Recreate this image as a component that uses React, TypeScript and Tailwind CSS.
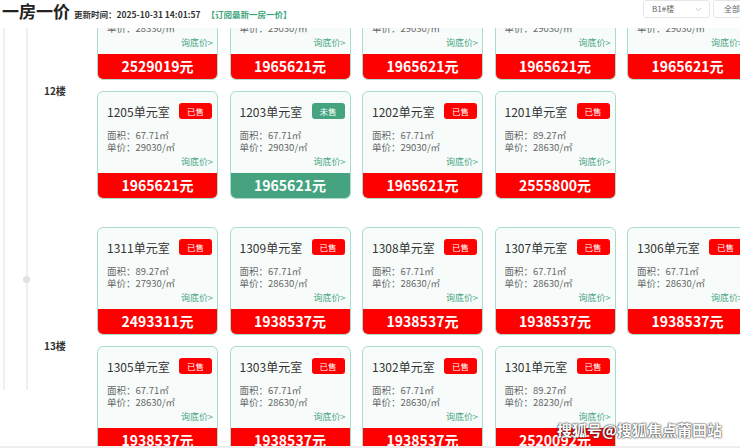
import React from "react";

type Unit = {
  no: string;
  area: string;
  price: string;
  total: string;
  sold: boolean;
};

type Floor = { name: string; units: Unit[] };

const u = (no: string, area: string, price: string, total: string, sold = true): Unit => ({
  no,
  area,
  price,
  total,
  sold,
});

const floors: Floor[] = [
  {
    name: "12楼",
    units: [
      u("1211", "89.27", "28330", "2529019"),
      u("1209", "67.71", "29030", "1965621"),
      u("1208", "67.71", "29030", "1965621"),
      u("1207", "67.71", "29030", "1965621"),
      u("1206", "67.71", "29030", "1965621"),
      u("1205", "67.71", "29030", "1965621"),
      u("1203", "67.71", "29030", "1965621", false),
      u("1202", "67.71", "29030", "1965621"),
      u("1201", "89.27", "28630", "2555800"),
    ],
  },
  {
    name: "13楼",
    units: [
      u("1311", "89.27", "27930", "2493311"),
      u("1309", "67.71", "28630", "1938537"),
      u("1308", "67.71", "28630", "1938537"),
      u("1307", "67.71", "28630", "1938537"),
      u("1306", "67.71", "28630", "1938537"),
      u("1305", "67.71", "28630", "1938537"),
      u("1303", "67.71", "28630", "1938537"),
      u("1302", "67.71", "28630", "1938537"),
      u("1301", "89.27", "28230", "2520092"),
    ],
  },
];

function UnitCard({ unit }: { unit: Unit }) {
  return (
    <div className="w-[121px] h-[108px] rounded-[6px] border border-[#a9dccb] bg-[#f7fcfa] overflow-hidden flex flex-col">
      <div className="flex-1 flex flex-col pt-[11px]">
        <div className="flex items-center justify-between h-[16px] pl-[9px] pr-[5px]">
          <span className="text-[12px] leading-[16px] text-[#333] mt-[2px]">{unit.no}单元室</span>
          {unit.sold ? (
            <span className="w-[33px] h-[16px] rounded-[3px] bg-[#ff0000] text-white text-[8.5px] leading-[16px] text-center">
              已售
            </span>
          ) : (
            <span className="w-[33px] h-[16px] rounded-[3px] bg-[#45a47f] text-white text-[8.5px] leading-[16px] text-center">
              未售
            </span>
          )}
        </div>
        <div className="mt-[10px] pl-[9px] text-[9.5px] leading-[12px] text-[#666]">
          面积：{unit.area}㎡
        </div>
        <div className="pl-[9px] text-[9.5px] leading-[12px] text-[#666]">单价：{unit.price}/㎡</div>
        <div className="mt-[3px] pr-[4px] text-right text-[9px] leading-[12px] text-[#4aa585]">询底价&gt;</div>
      </div>
      <div
        className={
          unit.sold
            ? "h-[25px] bg-[#ff0000] text-white text-[14px] font-bold leading-[25px] text-center"
            : "h-[25px] bg-[#45a47f] text-white text-[14px] font-bold leading-[25px] text-center"
        }
      >
        {unit.total}元
      </div>
    </div>
  );
}

function FloorSection({ floor, first }: { floor: Floor; first: boolean }) {
  return (
    <div className={first ? "relative flex" : "relative flex mt-[28px]"}>
      <span className="absolute left-[-5px] top-[49px] w-[7px] h-[7px] rounded-full bg-[#e2e2e2]" />
      <div className="w-[69px] shrink-0 flex items-center pt-[10px] pl-[16px]">
        <span className="text-[10px] font-bold text-[#333]">{floor.name}</span>
      </div>
      <div className="grid shrink-0 grid-cols-[repeat(5,121px)] gap-x-[11.5px] gap-y-[11px]">
        {floor.units.map((unit) => (
          <UnitCard key={unit.no} unit={unit} />
        ))}
      </div>
    </div>
  );
}

export default function App() {
  return (
    <div
      className="relative w-[740px] h-[448px] overflow-hidden bg-white flex flex-col"
      style={{ fontFamily: '"Noto Sans CJK SC", "Noto Sans", sans-serif' }}
    >
      <header className="relative z-10 h-[28px] shrink-0 bg-white flex items-start pl-[2px]">
        <div className="flex items-baseline">
          <span className="text-[17px] font-bold text-[#222] leading-[22px]">一房一价</span>
          <span className="ml-[4px] text-[8.5px] font-bold text-[#333]">更新时间：2025-10-31 14:01:57</span>
          <span className="ml-[6px] text-[8.5px] font-bold text-[#3aa57a]">【订阅最新一房一价】</span>
        </div>
        <div className="ml-auto mr-[-13px] flex gap-[3px] shrink-0">
          <div className="w-[67px] h-[18px] rounded-[3px] border border-[#e6e6e6] flex items-center pl-[8px] pr-[7px]">
            <span className="text-[8px] text-[#666]">B1#楼</span>
            <svg className="ml-auto" width="7" height="5" viewBox="0 0 7 5">
              <polyline points="0.5,0.8 3.5,3.8 6.5,0.8" fill="none" stroke="#bbb" strokeWidth="0.8" />
            </svg>
          </div>
          <div className="w-[40px] h-[18px] rounded-[3px] border border-[#e6e6e6] flex items-center pl-[10px]">
            <span className="text-[8px] text-[#666] whitespace-nowrap">全部</span>
          </div>
        </div>
      </header>

      <div className="relative flex-1 overflow-hidden">
        <div className="h-full pl-[3px]">
          <div className="h-full border-l-2 border-[#efefef] pl-[21px]">
            <div className="h-full border-l-2 border-[#efefef]">
              <div className="mt-[-56px]">
                {floors.map((floor, i) => (
                  <FloorSection key={floor.name} floor={floor} first={i === 0} />
                ))}
              </div>
            </div>
          </div>
        </div>
        <div className="absolute right-[18px] bottom-[5px] text-[15px] font-bold text-white [text-shadow:0_0_2px_#333,0_0_1px_#000]">
          搜狐号@搜狐焦点莆田站
        </div>
      </div>
      <div className="h-[2px] shrink-0 bg-[#eeeeee]" />
    </div>
  );
}
